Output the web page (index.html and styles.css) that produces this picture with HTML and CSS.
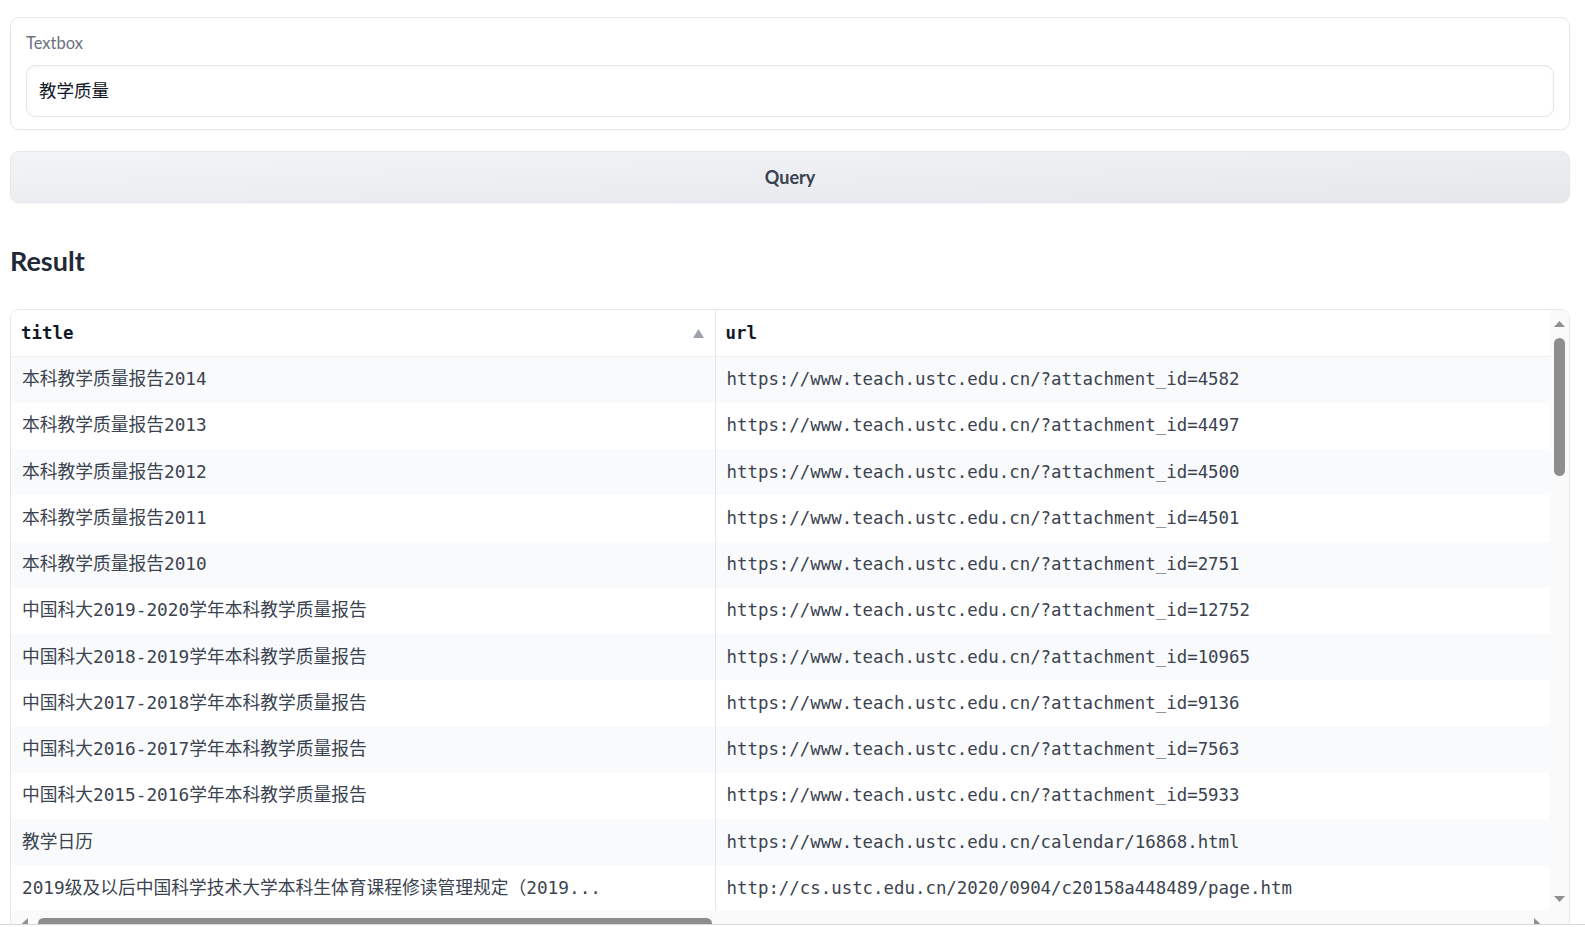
FILE: index.html
```html
<!DOCTYPE html>
<html lang="zh">
<head>
<meta charset="utf-8">
<title>Query</title>
<link rel="stylesheet" href="styles.css">
</head>
<body>
<div class="page">
<div class="app">
  <div class="block">
    <label class="label" for="q">Textbox</label>
    <input class="input" id="q" type="text" value="教学质量">
  </div>
  <button class="btn">Query</button>
  <h2 class="heading">Result</h2>
  <div class="table-frame">
    <div class="viewport">
      <table class="table">
        <colgroup><col class="c-title"><col class="c-url"></colgroup>
        <thead>
          <tr>
            <th><div class="th-inner"><span>title</span><svg class="sort" width="11" height="9" viewBox="0 0 11 9"><path d="M5.5 0 L11 9 L0 9 Z" fill="#9ca3af"/></svg></div></th>
            <th><div class="th-inner"><span>url</span></div></th>
          </tr>
        </thead>
        <tbody>
          <tr><td class="t">本科教学质量报告2014</td><td>https://www.teach.ustc.edu.cn/?attachment_id=4582</td></tr>
          <tr><td class="t">本科教学质量报告2013</td><td>https://www.teach.ustc.edu.cn/?attachment_id=4497</td></tr>
          <tr><td class="t">本科教学质量报告2012</td><td>https://www.teach.ustc.edu.cn/?attachment_id=4500</td></tr>
          <tr><td class="t">本科教学质量报告2011</td><td>https://www.teach.ustc.edu.cn/?attachment_id=4501</td></tr>
          <tr><td class="t">本科教学质量报告2010</td><td>https://www.teach.ustc.edu.cn/?attachment_id=2751</td></tr>
          <tr><td class="t">中国科大2019-2020学年本科教学质量报告</td><td>https://www.teach.ustc.edu.cn/?attachment_id=12752</td></tr>
          <tr><td class="t">中国科大2018-2019学年本科教学质量报告</td><td>https://www.teach.ustc.edu.cn/?attachment_id=10965</td></tr>
          <tr><td class="t">中国科大2017-2018学年本科教学质量报告</td><td>https://www.teach.ustc.edu.cn/?attachment_id=9136</td></tr>
          <tr><td class="t">中国科大2016-2017学年本科教学质量报告</td><td>https://www.teach.ustc.edu.cn/?attachment_id=7563</td></tr>
          <tr><td class="t">中国科大2015-2016学年本科教学质量报告</td><td>https://www.teach.ustc.edu.cn/?attachment_id=5933</td></tr>
          <tr><td class="t">教学日历</td><td>https://www.teach.ustc.edu.cn/calendar/16868.html</td></tr>
          <tr><td class="t">2019级及以后中国科学技术大学本科生体育课程修读管理规定（2019...</td><td>http://cs.ustc.edu.cn/2020/0904/c20158a448489/page.htm</td></tr>
        </tbody>
      </table>
    </div>
    <div class="vbar">
      <div class="arrow-btn v"><svg width="11" height="6" viewBox="0 0 11 6"><path d="M5.5 0 L11 6 L0 6 Z" fill="#8f8f8f"/></svg></div>
      <div class="vthumb"></div>
      <div class="vspace"></div>
      <div class="arrow-btn v"><svg width="11" height="6" viewBox="0 0 11 6"><path d="M0 0 L11 0 L5.5 6 Z" fill="#8f8f8f"/></svg></div>
    </div>
    <div class="hbar">
      <div class="arrow-btn h"><svg width="6" height="11" viewBox="0 0 6 11"><path d="M6 0 L6 11 L0 5.5 Z" fill="#8f8f8f"/></svg></div>
      <div class="hthumb"></div>
      <div class="hspace"></div>
      <div class="arrow-btn h"><svg width="6" height="11" viewBox="0 0 6 11"><path d="M0 0 L6 5.5 L0 11 Z" fill="#8f8f8f"/></svg></div>
    </div>
    <div class="corner"></div>
  </div>
</div>
</div>
</body>
</html>
```
FILE: styles.css
```css
* { box-sizing: border-box; }
html, body { margin: 0; padding: 0; background: #ffffff; }
body {
  font-family: Lato, "Noto Sans", "Noto Sans CJK SC", sans-serif;
  color: #1f2937;
  height: 927px;
  overflow: hidden;
}
.page {
  height: 925px;
  overflow: hidden;
  border-bottom: 1px solid #d9d9d9;
}
.app {
  padding: 17px 15px 0 10px;
  display: flex;
  flex-direction: column;
}
.block {
  border: 1px solid #e5e7eb;
  border-radius: 9px;
  padding: 15px 15px 12px 15px;
  display: flex;
  flex-direction: column;
  gap: 12px;
  box-shadow: 0 1px 2px rgba(0,0,0,0.03);
}
.label {
  font-size: 16.5px;
  line-height: 20px;
  color: #6b7280;
}
.input {
  height: 52px;
  border: 1px solid #e5e7eb;
  border-radius: 9px;
  padding: 0 12px 4px 12px;
  font-family: "Noto Sans CJK SC", sans-serif;
  font-size: 17.5px;
  color: #111827;
  background: #fff;
  box-shadow: inset 0 1px 3px rgba(0,0,0,0.05);
  outline: none;
}
.btn {
  margin-top: 21px;
  height: 52px;
  border: 1px solid #e5e7eb;
  border-radius: 9px;
  background: linear-gradient(to bottom right, #f3f4f6, #e5e7eb);
  font-family: Lato, "Noto Sans", sans-serif;
  font-size: 18px;
  font-weight: 700;
  color: #374151;
  box-shadow: 0 1px 2px rgba(0,0,0,0.04);
}
.heading {
  margin: 42px 0 32px 0;
  font-size: 27px;
  line-height: 32px;
  font-weight: 700;
  color: #1f2937;
}
.table-frame {
  height: 622px;
  border: 1px solid #e5e7eb;
  border-radius: 9px;
  overflow: hidden;
  display: grid;
  grid-template-columns: 1fr 19px;
  grid-template-rows: 601px 19px;
}
.viewport {
  overflow: hidden;
  min-width: 0;
}
.table {
  table-layout: fixed;
  border-collapse: collapse;
  width: 3300px;
  font-family: "DejaVu Sans Mono", "Noto Sans CJK SC", monospace;
  font-size: 17.4px;
  line-height: 22px;
  color: #3b4350;
}
.c-title { width: 704px; }
.c-url { width: 2596px; }
.table th, .table td {
  text-align: left;
  padding: 0 11px 1px 11px;
  height: 46.25px;
  white-space: nowrap;
  overflow: hidden;
  border-right: 1px solid #e5e7eb;
}
.table td.t {
  font-size: 17.75px;
  padding-bottom: 1px;
}
.table th {
  height: 46.5px;
  padding: 0 10px;
  font-weight: 700;
  color: #111827;
  background: #fff;
  border-bottom: 1px solid #eef0f3;
}
.th-inner {
  display: flex;
  align-items: center;
  justify-content: space-between;
}
.sort { margin-right: 1px; }
.table tbody tr:nth-child(odd) td { background: #f9fafb; }
.table tbody tr:nth-child(even) td { background: #ffffff; }

.vbar {
  background: #fafafa;
  display: flex;
  flex-direction: column;
  align-items: center;
}
.arrow-btn {
  display: flex;
  align-items: center;
  justify-content: center;
  flex: none;
}
.arrow-btn.v { width: 19px; height: 28px; }
.vbar .arrow-btn.v:last-child { height: 24px; }
.vthumb {
  width: 11px;
  height: 138px;
  border-radius: 6px;
  background: #8e8e8e;
  flex: none;
}
.vspace { flex: 1; }
.hbar {
  background: #fafafa;
  display: flex;
  align-items: flex-start;
  padding-top: 7px;
}
.arrow-btn.h { width: 27px; height: 11px; }
.hthumb {
  width: 674px;
  height: 11px;
  border-radius: 6px;
  background: #8e8e8e;
  flex: none;
}
.hspace { flex: 1; }
.corner { background: #fafafa; }
```
